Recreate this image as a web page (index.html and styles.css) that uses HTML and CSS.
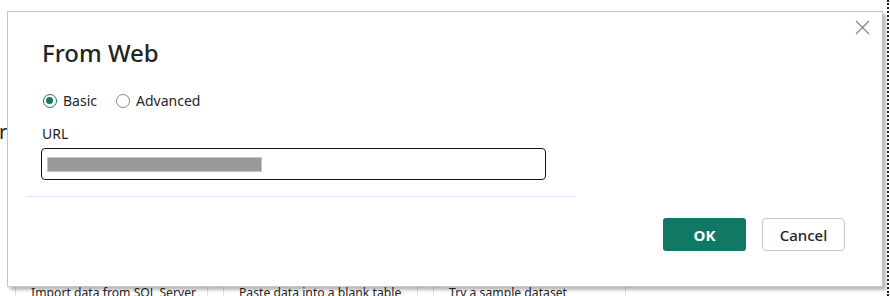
FILE: index.html
```html
<!DOCTYPE html>
<html lang="en">
<head>
<meta charset="utf-8">
<title>From Web</title>
<link rel="stylesheet" href="styles.css">
</head>
<body>
<div class="page">
  <div class="behind-heading"><span>r</span></div>
  <div class="cards">
    <div class="card">Import data from SQL Server</div>
    <div class="card">Paste data into a blank table</div>
    <div class="card">Try a sample dataset</div>
  </div>
  <div class="dotted"></div>
</div>

<div class="dialog" role="dialog" aria-label="From Web">
  <button class="close" aria-label="Close">
    <svg width="15" height="15" viewBox="0 0 15 15"><path d="M1 1L14 14M14 1L1 14" stroke="#8a8886" stroke-width="1.3" fill="none"/></svg>
  </button>
  <div class="form">
    <div class="fields">
      <h1 class="title">From Web</h1>
      <div class="radios">
        <label class="radio"><span class="dot checked"></span>Basic</label>
        <label class="radio"><span class="dot"></span>Advanced</label>
      </div>
      <div class="label">URL</div>
      <div class="input"><span class="mask"></span></div>
    </div>
    <div class="sep"></div>
  </div>
  <div class="footer">
    <button class="btn primary">OK</button>
    <button class="btn secondary">Cancel</button>
  </div>
</div>
</body>
</html>
```

FILE: styles.css
```css
* { box-sizing: border-box; }
html, body {
  margin: 0;
  padding: 0;
  background: #fff;
  width: 890px;
  height: 296px;
  overflow: hidden;
  font-family: "Noto Sans", "Open Sans", sans-serif;
  color: #252423;
}
body { position: relative; }

.page {
  width: 890px;
  height: 296px;
  display: flex;
  flex-direction: column;
  justify-content: space-between;
  position: relative;
}
.behind-heading {
  margin-top: 118px;
  font-size: 20px;
  line-height: 28px;
  color: #252423;
  margin-left: -1px;
}
.cards {
  display: flex;
  gap: 15px;
  padding-left: 15px;
  height: 12px;
  overflow: visible;
}
.card {
  width: 193px;
  height: 60px;
  margin-top: -28px;
  border: 1px solid #e1dfdd;
  padding: 27px 0 0 15px;
  font-size: 12.2px;
  line-height: 18px;
  color: #252423;
  white-space: nowrap;
  background: #fff;
}
.card:nth-child(2) { width: 195px; }
.dotted {
  position: absolute;
  left: 887px;
  top: 0;
  height: 296px;
  border-left: 2px dotted #222;
}

.dialog {
  position: absolute;
  left: 7px;
  top: 11px;
  width: 876px;
  height: 276px;
  background: #fff;
  border: 1px solid #c8c6c4;
  box-shadow: 3px 3px 3px rgba(0,0,0,0.28);
  padding-left: 18px;
  display: flex;
  flex-direction: column;
}
.close {
  position: absolute;
  right: 12px;
  top: 8px;
  width: 15px;
  height: 15px;
  padding: 0;
  border: 0;
  background: none;
  display: flex;
}
.form { width: 550px; }
.fields { padding-left: 16px; }
.title {
  margin: 25px 0 0;
  font-size: 24px;
  line-height: 32px;
  font-weight: 500;
  color: #252423;
}
.radios {
  display: flex;
  gap: 19px;
  margin-top: 22px;
  height: 20px;
  align-items: center;
  padding-left: 1px;
}
.radio {
  display: flex;
  align-items: center;
  gap: 6px;
  font-size: 14px;
  line-height: 20px;
}
.dot {
  width: 14px;
  height: 14px;
  border-radius: 50%;
  border: 1px solid #8a8886;
  display: inline-block;
  position: relative;
}
.dot.checked { border: 1.5px solid #117865; }
.dot.checked::after {
  content: "";
  position: absolute;
  left: 2px;
  top: 2px;
  width: 7px;
  height: 7px;
  border-radius: 50%;
  background: #117865;
}
.label {
  margin-top: 13px;
  font-size: 14px;
  line-height: 20px;
}
.input {
  margin-top: 4px;
  margin-left: -1px;
  width: 505px;
  height: 32px;
  border: 1.5px solid #111;
  border-radius: 4px;
  padding: 7.5px 0 0 5px;
}
.mask {
  display: block;
  width: 215px;
  height: 15px;
  background: #999;
  border: 1px solid #c4c4c4;
}
.sep {
  margin-top: 16px;
  height: 1px;
  background: #d4e6fb;
}
.footer {
  display: flex;
  justify-content: flex-end;
  gap: 16px;
  padding-right: 37px;
  margin-top: 21px;
}
.btn {
  width: 83px;
  height: 33px;
  font-family: "Noto Sans", "Open Sans", sans-serif;
  font-size: 15px;
  border-radius: 4px;
  padding: 0;
}
.primary {
  background: #117865;
  color: #fff;
  border: 0;
  border-radius: 3px;
  font-weight: 700;
}
.secondary {
  background: #fff;
  color: #252423;
  border: 1px solid #c8c6c4;
  font-weight: 500;
}
```
